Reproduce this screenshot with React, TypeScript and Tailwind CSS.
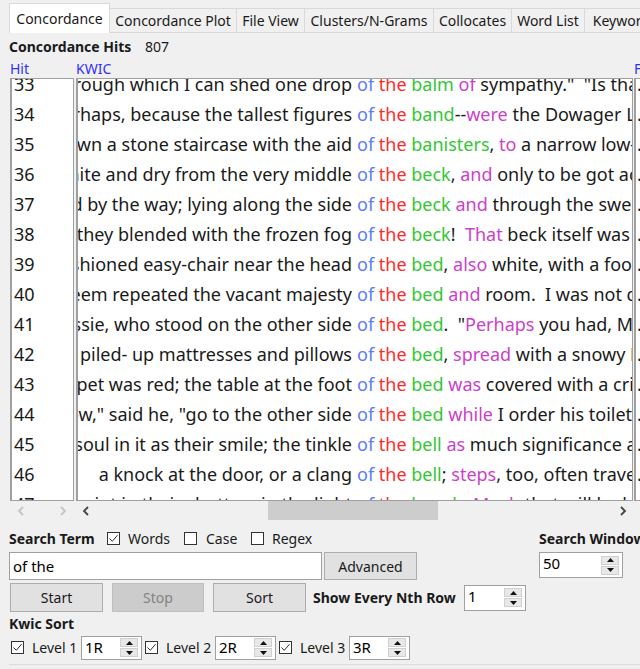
import React from "react";

// AntConc の Concordance タブ画面
type Seg = [string, string?];

const tone: Record<string, string> = {
  b: "text-[#5b7cff]",
  r: "text-[#ff2b2b]",
  g: "text-[#33c733]",
  m: "text-[#cc3fcc]",
};

const rows: { n: number; left: string; right: Seg[] }[] = [
  { n: 33, left: "the tear through which I can shed one drop", right: [["of", "b"], [" "], ["the", "r"], [" "], ["balm", "g"], [" "], ["of", "m"], [" sympathy.\"  \"Is that so, then you have"]] },
  { n: 34, left: "And this was, perhaps, because the tallest figures", right: [["of", "b"], [" "], ["the", "r"], [" "], ["band", "g"], ["--"], ["were", "m"], [" the Dowager Lady Ingram and"]] },
  { n: 35, left: "she led the way down a stone staircase with the aid", right: [["of", "b"], [" "], ["the", "r"], [" "], ["banisters", "g"], [", "], ["to", "m"], [" a narrow low-ceiled room"]] },
  { n: 36, left: "that it was quite white and dry from the very middle", right: [["of", "b"], [" "], ["the", "r"], [" "], ["beck", "g"], [", "], ["and", "m"], [" only to be got across by"]] },
  { n: 37, left: "were scattered by the way; lying along the side", right: [["of", "b"], [" "], ["the", "r"], [" "], ["beck", "g"], [" "], ["and", "m"], [" through the sweet hollow of"]] },
  { n: 38, left: "where they blended with the frozen fog", right: [["of", "b"], [" "], ["the", "r"], [" "], ["beck", "g"], ["!  "], ["That", "m"], [" beck itself was frozen over"]] },
  { n: 39, left: "an old-fashioned easy-chair near the head", right: [["of", "b"], [" "], ["the", "r"], [" "], ["bed", "g"], [", "], ["also", "m"], [" white, with a footstool before"]] },
  { n: 40, left: "seem repeated the vacant majesty", right: [["of", "b"], [" "], ["the", "r"], [" "], ["bed", "g"], [" "], ["and", "m"], [" room.  I was not quite sure"]] },
  { n: 41, left: "It was Bessie, who stood on the other side", right: [["of", "b"], [" "], ["the", "r"], [" "], ["bed", "g"], [".  \""], ["Perhaps", "m"], [" you had, Miss Eyre"]] },
  { n: 42, left: "a bed with piled- up mattresses and pillows", right: [["of", "b"], [" "], ["the", "r"], [" "], ["bed", "g"], [", "], ["spread", "m"], [" with a snowy Marseilles"]] },
  { n: 43, left: "the carpet was red; the table at the foot", right: [["of", "b"], [" "], ["the", "r"], [" "], ["bed", "g"], [" "], ["was", "m"], [" covered with a crimson cloth"]] },
  { n: 44, left: "\"Now,\" said he, \"go to the other side", right: [["of", "b"], [" "], ["the", "r"], [" "], ["bed", "g"], [" "], ["while", "m"], [" I order his toilette to be"]] },
  { n: 45, left: "as much soul in it as their smile; the tinkle", right: [["of", "b"], [" "], ["the", "r"], [" "], ["bell", "g"], [" "], ["as", "m"], [" much significance as the"]] },
  { n: 46, left: "a knock at the door, or a clang", right: [["of", "b"], [" "], ["the", "r"], [" "], ["bell", "g"], ["; "], ["steps", "m"], [", too, often traversed the"]] },
  { n: 47, left: "a point in their shutters in the light", right: [["of", "b"], [" "], ["the", "r"], [" "], ["bench", "g"], [". "], ["Much", "m"], [" that will be left behind"]] },
];

const tabs = [
  { label: "Concordance Plot", w: "w-[127px]" },
  { label: "File View", w: "w-[68px]" },
  { label: "Clusters/N-Grams", w: "w-[129px]" },
  { label: "Collocates", w: "w-[78px]" },
  { label: "Word List", w: "w-[73px]" },
  { label: "Keyword List", w: "w-[100px]" },
];

const Check = ({ on }: { on?: boolean }) => (
  <span className="w-[13px] h-[13px] border border-[#333333] bg-white flex items-center justify-center shrink-0">
    {on && (
      <svg width="11" height="11" viewBox="0 0 11 11">
        <path d="M1.5 5.5 L4.3 8.3 L9.5 2.2" fill="none" stroke="#333333" strokeWidth="1" />
      </svg>
    )}
  </span>
);

const Spin = ({ value, w, h }: { value: string; w: string; h: string }) => (
  <div className={`${w} ${h} flex border border-[#a0a0a0] bg-white shrink-0`}>
    <span className="flex-1 pl-[3px] text-[15px] leading-[20px] text-black">{value}</span>
    <div className="flex flex-col justify-center gap-[1px] pr-[3px]">
      <span className="w-[18px] h-[9px] bg-[#e8e8e8] border border-[#d0d0d0] flex items-center justify-center">
        <svg width="7" height="4" viewBox="0 0 7 4"><path d="M0 4 L3.5 0 L7 4 Z" fill="#111" /></svg>
      </span>
      <span className="w-[18px] h-[9px] bg-[#e8e8e8] border border-[#d0d0d0] flex items-center justify-center">
        <svg width="7" height="4" viewBox="0 0 7 4"><path d="M0 0 L3.5 4 L7 0 Z" fill="#111" /></svg>
      </span>
    </div>
  </div>
);

const Chev = ({ dir, light }: { dir: "l" | "r"; light?: boolean }) => (
  <svg width="8" height="10" viewBox="0 0 8 10">
    <path
      d={dir === "l" ? "M6 1 L2 5 L6 9" : "M2 1 L6 5 L2 9"}
      fill="none"
      stroke={light ? "#c4c4c4" : "#444"}
      strokeWidth="1.8"
    />
  </svg>
);

export default function App() {
  return (
    <div className="w-[640px] h-[669px] overflow-hidden bg-[#f0f0f0] font-['Noto_Sans',sans-serif] text-[#1a1a1a]">
      <div className="w-[760px]">
        {/* tabs */}
        <div className="flex items-end h-[33px] pl-[9px]">
          <div className="w-[101px] h-[30px] bg-white border border-b-0 border-[#d9d9d9] flex items-center justify-center text-[14px]">
            Concordance
          </div>
          {tabs.map((t) => (
            <div
              key={t.label}
              className={`${t.w} h-[25px] border-t border-r border-b border-[#d9d9d9] flex items-center justify-center text-[14px]`}
            >
              {t.label}
            </div>
          ))}
        </div>

        <div className="pl-[9px]">
          <div className="flex items-center h-[26px] text-[14px]">
            <span className="font-bold w-[136px]">Concordance Hits</span>
            <span>807</span>
          </div>
          <div className="flex h-[19px] items-center text-[14px] text-[#3030ff]">
            <span className="w-[67px] pl-[1px]">Hit</span>
            <span className="w-[558px]">KWIC</span>
            <span>File</span>
          </div>

          {/* table */}
          <div className="flex h-[423px]">
            <div className="w-[64px] ml-[1px] border border-[#a0a0a0] border-l-2 bg-white overflow-hidden">
              <div className="-mt-[10px]">
                {rows.map((r) => (
                  <div key={r.n} className="h-[30px] leading-[30px] pl-[2px] text-[18px]">
                    {r.n}
                  </div>
                ))}
              </div>
            </div>
            <div className="w-[557px] ml-[2px] border border-[#a0a0a0] border-l-2 bg-white overflow-hidden">
              <div className="-mt-[10px]">
                {rows.map((r) => (
                  <div key={r.n} className="h-[30px] leading-[30px] flex whitespace-pre text-[18px]">
                    <div className="w-[274px] shrink-0 overflow-hidden flex justify-end">
                      <span className="shrink-0">{r.left}</span>
                    </div>
                    <div className="pl-[5px] shrink-0">
                      {r.right.map(([t, c], i) => (
                        <span key={i} className={c ? tone[c] : ""}>
                          {t}
                        </span>
                      ))}
                    </div>
                  </div>
                ))}
              </div>
            </div>
            <div className="w-[120px] ml-[1px] border border-[#a0a0a0] border-l-2 bg-white overflow-hidden">
              <div className="-mt-[10px]">
                {rows.map((r) => (
                  <div key={r.n} className="h-[30px] leading-[30px] pl-[1px] text-[18px]">
                    . bronte.txt
                  </div>
                ))}
              </div>
            </div>
          </div>

          {/* scrollbars */}
          <div className="flex h-[20px]">
            <div className="w-[64px] ml-[1px] flex items-center justify-between px-[7px]">
              <Chev dir="l" light />
              <Chev dir="r" light />
            </div>
            <div className="w-[557px] ml-[2px] flex items-center">
              <div className="w-[20px] flex justify-center">
                <Chev dir="l" />
              </div>
              <div className="flex-1 h-full flex">
                <div className="w-[170px] h-[19px] bg-[#cdcdcd] ml-[172px]" />
              </div>
              <div className="w-[20px] flex justify-center">
                <Chev dir="r" />
              </div>
            </div>
          </div>

          {/* search controls */}
          <div className="flex mt-[6px]">
            <div className="w-[530px]">
              <div className="flex items-center h-[22px] text-[14px]">
                <span className="font-bold w-[98px]">Search Term</span>
                <Check on />
                <span className="ml-[8px] w-[56px]">Words</span>
                <Check />
                <span className="ml-[9px] w-[45px]">Case</span>
                <Check />
                <span className="ml-[8px]">Regex</span>
              </div>
              <div className="flex mt-[3px] h-[28px]">
                <div className="w-[313px] border border-[#a0a0a0] bg-white pl-[3px] text-[15px] leading-[26px] text-black">
                  of the
                </div>
                <div className="w-[93px] ml-[2px] bg-[#e1e1e1] border border-[#adadad] flex items-center justify-center text-[14px]">
                  Advanced
                </div>
              </div>
              <div className="flex items-center mt-[3px] h-[29px] text-[14px]">
                <div className="w-[93px] h-full ml-[1px] bg-[#e1e1e1] border border-[#adadad] flex items-center justify-center">
                  Start
                </div>
                <div className="w-[92px] h-full ml-[9px] bg-[#cccccc] border border-[#bfbfbf] flex items-center justify-center text-[#838383]">
                  Stop
                </div>
                <div className="w-[93px] h-full ml-[9px] bg-[#e1e1e1] border border-[#adadad] flex items-center justify-center">
                  Sort
                </div>
                <span className="ml-[7px] font-bold w-[151px]">Show Every Nth Row</span>
                <Spin value="1" w="w-[62px]" h="h-[26px]" />
              </div>
              <div className="h-[22px] flex items-center font-bold text-[14px]">Kwic Sort</div>
              <div className="flex items-center h-[25px] mt-[1px] text-[14px]">
                <span className="ml-[2px]"><Check on /></span>
                <span className="ml-[8px] w-[49px]">Level 1</span>
                <Spin value="1R" w="w-[61px]" h="h-[24px]" />
                <span className="ml-[3px]"><Check on /></span>
                <span className="ml-[8px] w-[49px]">Level 2</span>
                <Spin value="2R" w="w-[61px]" h="h-[24px]" />
                <span className="ml-[3px]"><Check on /></span>
                <span className="ml-[8px] w-[49px]">Level 3</span>
                <Spin value="3R" w="w-[61px]" h="h-[24px]" />
              </div>
              <div className="mt-[4px] border-b border-[#dcdcdc] w-[700px]" />
            </div>
            <div>
              <div className="h-[22px] flex items-center font-bold text-[14px]">Search Window</div>
              <div className="mt-[3px]">
                <Spin value="50" w="w-[84px]" h="h-[26px]" />
              </div>
            </div>
          </div>
        </div>
      </div>
    </div>
  );
}
